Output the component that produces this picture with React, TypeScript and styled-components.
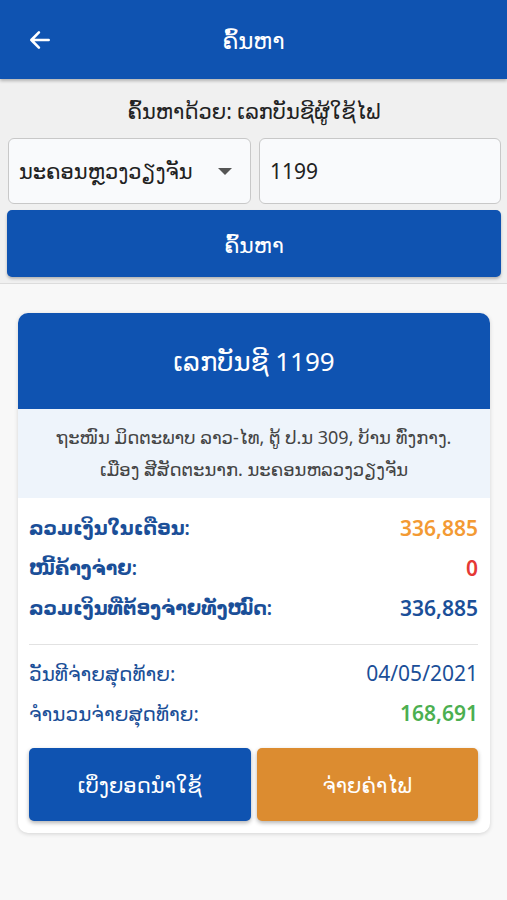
import React from "react";
import styled, { createGlobalStyle } from "styled-components";

const GlobalStyle = createGlobalStyle`
  html, body {
    margin: 0;
    padding: 0;
    background: #f8f8f8;
    font-family: "Noto Sans", "DejaVu Sans", sans-serif;
  }
  * { box-sizing: border-box; }
`;

const Page = styled.div`
  width: 507px;
  min-height: 900px;
  background: #f8f8f8;
`;

const AppBar = styled.header`
  height: 79px;
  background: #0f53b1;
  display: flex;
  align-items: center;
  position: relative;
  box-shadow: 0 2px 3px rgba(0, 0, 0, 0.25);
  z-index: 2;
`;

const BackButton = styled.button`
  width: 80px;
  height: 79px;
  border: none;
  background: transparent;
  display: flex;
  align-items: center;
  justify-content: center;
  padding: 0;
`;

const AppTitle = styled.h1`
  position: absolute;
  left: 0;
  right: 0;
  margin: 0;
  text-align: center;
  color: #fff;
  font-size: 23px;
  font-weight: 400;
  pointer-events: none;
`;

const SearchPanel = styled.section`
  background: #f0f0f0;
  padding: 14px 6px 6px 7px;
  border-bottom: 1px solid #dcdcdc;
  display: flex;
  flex-direction: column;
  gap: 6px;
`;

const SearchLabel = styled.div`
  height: 36px;
  line-height: 36px;
  text-align: center;
  font-size: 21px;
  color: #222;
  margin-bottom: 3px;
`;

const FieldRow = styled.div`
  display: grid;
  grid-template-columns: 243px 1fr;
  gap: 8px;
  padding-left: 1px;
`;

const Field = styled.div`
  height: 66px;
  background: #f9fafc;
  border: 1px solid #c8c8c8;
  border-radius: 6px;
  display: flex;
  align-items: center;
  justify-content: space-between;
  padding: 0 18px 0 10px;
  font-size: 21px;
  color: #222;
`;

const Caret = styled.span`
  width: 0;
  height: 0;
  border-left: 7px solid transparent;
  border-right: 7px solid transparent;
  border-top: 7px solid #555;
`;

const PrimaryButton = styled.button`
  height: 67px;
  border: none;
  border-radius: 5px;
  background: #0f53b1;
  color: #fff;
  font-family: inherit;
  font-size: 22px;
  box-shadow: 0 2px 3px rgba(0, 0, 0, 0.25);
`;

const Content = styled.main`
  padding: 29px 17px 0 18px;
`;

const Card = styled.article`
  background: #fff;
  border-radius: 10px;
  overflow: hidden;
  box-shadow: 0 1px 4px rgba(0, 0, 0, 0.15);
  padding-bottom: 12px;
`;

const CardHeader = styled.div`
  height: 96px;
  background: #0f53b1;
  color: #fff;
  font-size: 26px;
  display: flex;
  align-items: center;
  justify-content: center;
`;

const Address = styled.div`
  height: 89px;
  background: #eef4fb;
  color: #444;
  font-size: 18px;
  line-height: 32px;
  text-align: center;
  padding: 12px 10px 0;
`;

const Rows = styled.div`
  padding: 10px 12px 0 11px;
`;

const Row = styled.div`
  display: flex;
  justify-content: space-between;
  align-items: center;
  height: 40px;
`;

const Label = styled.span<{ $bold?: boolean }>`
  color: #1b4f98;
  font-size: ${(p) => (p.$bold ? 19 : 20)}px;
  font-weight: ${(p) => (p.$bold ? 600 : 400)};
`;

const Value = styled.span<{ $color: string; $bold?: boolean }>`
  color: ${(p) => p.$color};
  font-size: 21px;
  font-weight: ${(p) => (p.$bold ? 600 : 400)};
`;

const Divider = styled.hr`
  border: none;
  border-top: 1px solid #e2e2e2;
  margin: 16px 0 8px;
`;

const Actions = styled.div`
  display: grid;
  grid-template-columns: 1fr 1fr;
  gap: 6px;
  padding: 15px 12px 0 11px;
`;

const ActionButton = styled.button<{ $bg: string }>`
  height: 73px;
  border: none;
  border-radius: 5px;
  background: ${(p) => p.$bg};
  color: #fff;
  font-family: inherit;
  font-size: 21px;
  box-shadow: 0 2px 4px rgba(0, 0, 0, 0.3);
`;

export default function App() {
  return (
    <Page>
      <GlobalStyle />
      <AppBar>
        <BackButton aria-label="back">
          <svg width="26" height="26" viewBox="0 0 24 24" fill="none" stroke="#fff" strokeWidth="2.4" strokeLinecap="round" strokeLinejoin="round">
            <path d="M20 12H4M11 5l-7 7 7 7" />
          </svg>
        </BackButton>
        <AppTitle>ຄົ້ນຫາ</AppTitle>
      </AppBar>

      <SearchPanel>
        <SearchLabel>ຄົ້ນຫາດ້ວຍ: ເລກບັນຊີຜູ້ໃຊ້ໄຟ</SearchLabel>
        <FieldRow>
          <Field>
            <span>ນະຄອນຫຼວງວຽງຈັນ</span>
            <Caret />
          </Field>
          <Field>
            <span>1199</span>
          </Field>
        </FieldRow>
        <PrimaryButton>ຄົ້ນຫາ</PrimaryButton>
      </SearchPanel>

      <Content>
        <Card>
          <CardHeader>ເລກບັນຊີ 1199</CardHeader>
          <Address>
            ຖະໜົນ ມິດຕະພາບ ລາວ-ໄທ, ຕູ້ ປ.ນ 309, ບ້ານ ທົ່ງກາງ.
            <br />
            ເມືອງ ສີສັດຕະນາກ. ນະຄອນຫລວງວຽງຈັນ
          </Address>
          <Rows>
            <Row>
              <Label $bold>ລວມເງິນໃນເດືອນ:</Label>
              <Value $color="#f39a33" $bold>336,885</Value>
            </Row>
            <Row>
              <Label $bold>ໜີ້ຄ້າງຈ່າຍ:</Label>
              <Value $color="#e53935" $bold>0</Value>
            </Row>
            <Row>
              <Label $bold>ລວມເງິນທີ່ຕ້ອງຈ່າຍທັງໝົດ:</Label>
              <Value $color="#1b4f98" $bold>336,885</Value>
            </Row>
            <Divider />
            <Row>
              <Label>ວັນທີຈ່າຍສຸດທ້າຍ:</Label>
              <Value $color="#1b4f98">04/05/2021</Value>
            </Row>
            <Row>
              <Label>ຈຳນວນຈ່າຍສຸດທ້າຍ:</Label>
              <Value $color="#4caf50" $bold>168,691</Value>
            </Row>
          </Rows>
          <Actions>
            <ActionButton $bg="#0f53b1">ເບິ່ງຍອດນຳໃຊ້</ActionButton>
            <ActionButton $bg="#dc8c30">ຈ່າຍຄ່າໄຟ</ActionButton>
          </Actions>
        </Card>
      </Content>
    </Page>
  );
}
